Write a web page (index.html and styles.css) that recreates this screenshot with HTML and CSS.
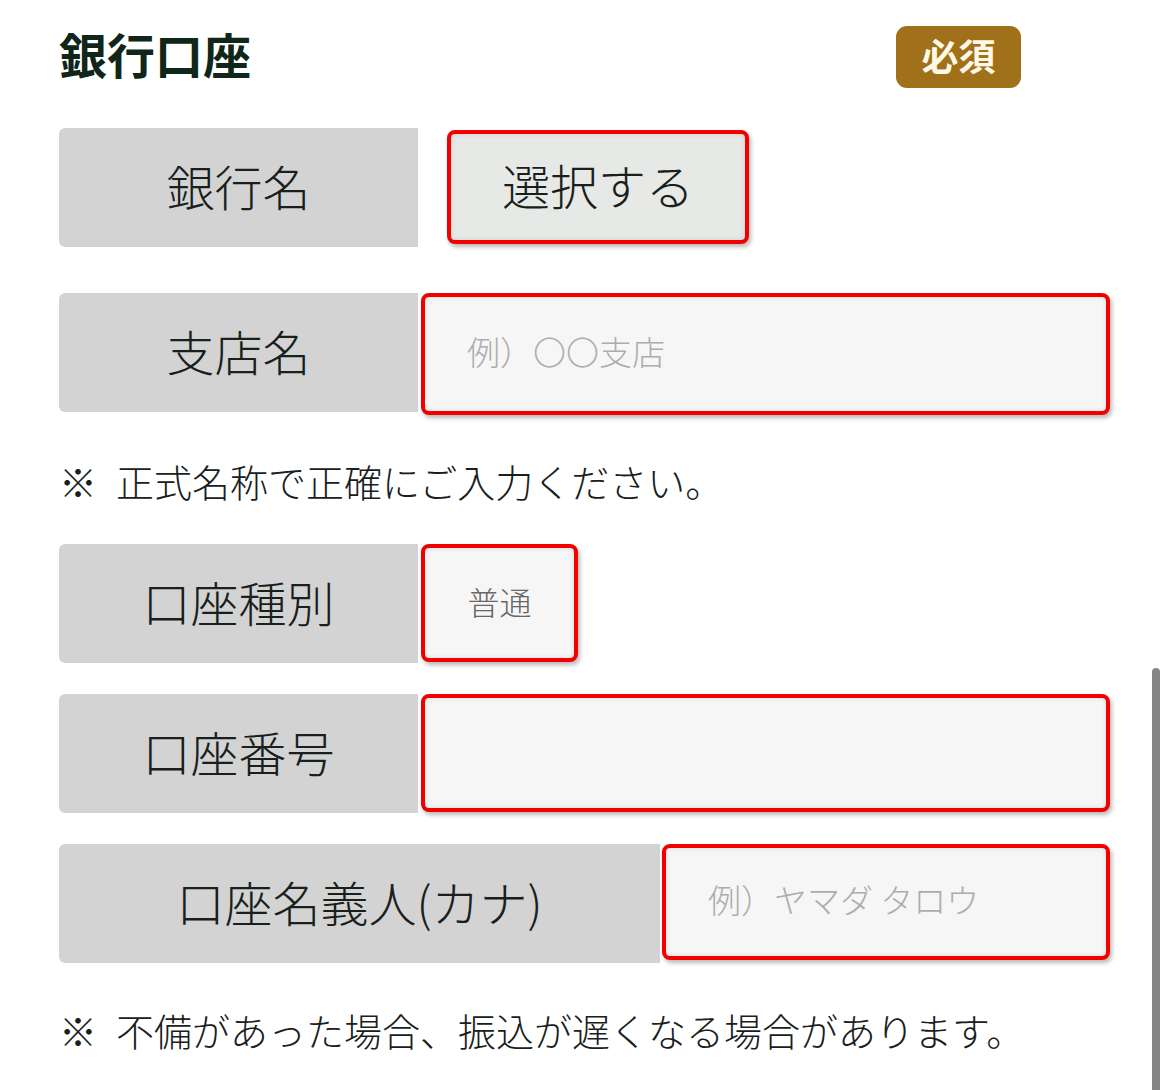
FILE: index.html
```html
<!DOCTYPE html>
<html lang="ja">
<head>
<meta charset="utf-8">
<title>銀行口座</title>
<link rel="stylesheet" href="styles.css">
</head>
<body>
<div class="form">
  <div class="header">
    <h2 class="title">銀行口座</h2>
    <span class="badge">必須</span>
  </div>

  <div class="row row-first">
    <div class="label">銀行名</div>
    <button class="field select-btn" type="button">選択する</button>
  </div>

  <div class="row row-gap-lg">
    <div class="label">支店名</div>
    <input class="field input input-branch" type="text" placeholder="例）〇〇支店">
  </div>

  <p class="note note-first"><span class="mark">※</span>正式名称で正確にご入力ください。</p>

  <div class="row row-after-note">
    <div class="label">口座種別</div>
    <div class="field type-box">普通</div>
  </div>

  <div class="row row-gap">
    <div class="label">口座番号</div>
    <input class="field input input-number" type="text">
  </div>

  <div class="row row-gap">
    <div class="label label-wide">口座名義人(カナ)</div>
    <input class="field input input-kana" type="text" placeholder="例）ヤマダ タロウ">
  </div>

  <p class="note note-last"><span class="mark">※</span>不備があった場合、振込が遅くなる場合があります。</p>
</div>
<div class="scrollbar"></div>
</body>
</html>
```

FILE: styles.css
```css
html, body {
  margin: 0;
  padding: 0;
  background: #ffffff;
  height: 1090px;
  overflow: hidden;
}

body {
  font-family: "Noto Sans CJK JP", "Noto Sans", sans-serif;
  color: #17201b;
}

.form {
  width: 1051px;
  margin-left: 59px;
}

.header {
  display: flex;
  align-items: center;
  padding-top: 26px;
  height: 62px;
}

.title {
  margin: 0;
  font-size: 48px;
  font-weight: 700;
  line-height: 62px;
  padding-bottom: 8px;
  color: #0f2619;
}

.badge {
  margin-left: auto;
  margin-right: 89px;
  width: 125px;
  height: 62px;
  box-sizing: border-box;
  border-radius: 11px;
  background: #a0701a;
  color: #fff9e6;
  font-size: 37px;
  font-weight: 700;
  display: flex;
  align-items: center;
  justify-content: center;
  line-height: 1;
  padding-bottom: 3px;
}

.row {
  display: flex;
  align-items: flex-start;
}

.row-first { margin-top: 40px; }
.row-gap-lg { margin-top: 46px; }
.row-gap { margin-top: 31px; }
.row-after-note { margin-top: 33px; }

.label {
  width: 359px;
  height: 119px;
  box-sizing: border-box;
  padding-bottom: 6px;
  flex: none;
  background: #d3d3d3;
  border-radius: 6px 0 0 6px;
  display: flex;
  align-items: center;
  justify-content: center;
  font-size: 48px;
  font-weight: 300;
  color: #17201b;
  line-height: 1;
}

.label-wide { width: 601px; }

.field {
  box-sizing: border-box;
  border: 4px solid #f20000;
  border-radius: 8px;
  box-shadow: 2px 3px 4px rgba(0, 0, 0, 0.28), inset 0 0 5px rgba(0, 0, 0, 0.12);
  font-family: "Noto Sans CJK JP", "Noto Sans", sans-serif;
  margin: 0;
  outline: none;
}

.select-btn {
  margin-left: 29px;
  margin-top: 2px;
  width: 302px;
  height: 114px;
  background: #e7e9e7;
  font-size: 48px;
  font-weight: 300;
  color: #17201b;
  padding: 0 0 6px 0;
  line-height: 1;
}

.input {
  background: #f6f6f6;
  font-size: 33px;
  font-weight: 300;
  color: #17201b;
  padding: 0 0 6px 42px;
}

.input::placeholder {
  color: #adadad;
}

.input-branch {
  margin-left: 3px;
  width: 689px;
  height: 122px;
}

.input-number {
  margin-left: 3px;
  width: 689px;
  height: 118px;
}

.input-kana {
  margin-left: 2px;
  width: 448px;
  height: 116px;
}

.type-box {
  margin-left: 3px;
  width: 157px;
  height: 118px;
  padding-bottom: 4px;
  background: #f6f6f6;
  display: flex;
  align-items: center;
  justify-content: center;
  font-size: 32px;
  font-weight: 300;
  color: #666666;
  line-height: 1;
}

.note {
  margin: 0;
  font-size: 38px;
  font-weight: 300;
  line-height: 60px;
  color: #17201b;
}

.note-first { margin-top: 36px; }
.note-last { margin-top: 37px; }

.mark {
  margin-right: 19px;
}

.scrollbar {
  position: absolute;
  left: 1152px;
  top: 668px;
  width: 8px;
  height: 440px;
  border-radius: 4px;
  background: #858585;
}
```
